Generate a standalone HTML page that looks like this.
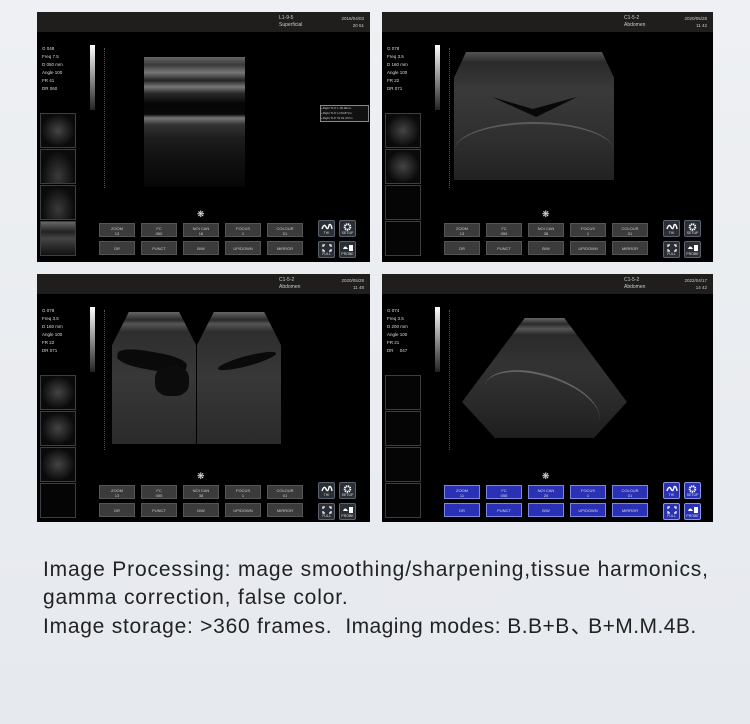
<!DOCTYPE html>
<html><head><meta charset="utf-8"><style>
*{margin:0;padding:0;box-sizing:border-box}
body{width:750px;height:724px;overflow:hidden;background:linear-gradient(180deg,#eef0f3 0%,#e9ecf0 60%,#e6e9ee 100%);font-family:"Liberation Sans",sans-serif;position:relative}
.p{position:absolute;width:331px;height:250px;background:#000;overflow:hidden}
.hd{position:absolute;left:0;top:0;width:100%;height:20px;background:#1f1e1d}
.hd .a{position:absolute;left:242px;top:3px;color:#ccc;font-size:5px;line-height:7px}
.hd .b{position:absolute;right:6px;top:3px;color:#ccc;font-size:4.5px;line-height:7px;text-align:right}
.info{position:absolute;left:5px;top:33px;color:#ddd;font-size:4.5px;line-height:8px}
.bar{position:absolute;left:53px;top:33px;width:5px;height:65px;background:linear-gradient(#fff,#222)}
.th{position:absolute;left:3px;width:36px;height:35px;border:1px solid #3a3f44;background:#050505}
.bt{position:absolute;width:36px;height:14px;background:#3b3b3b;border:1px solid #555;color:#ccc;font-size:4px;text-align:center;line-height:5px;padding-top:2px}
.blue .bt{background:#2b31b5;border:1px solid #7a86e6;color:#ddd}
.ic{position:absolute;width:17px;height:17px;background:#2a2f36;border:1px solid #5a6270;border-radius:2px;color:#ddd;font-size:3.5px;text-align:center}
.blue .ic{background:#2b31b5;border-color:#8a92e8}
.ic svg{display:block;margin:2px auto 0}
.snow{position:absolute;left:160px;top:197px;color:#eee;font-size:9px}
.img{position:absolute}
.dot{position:absolute;left:67px;top:36px;width:1px;height:140px;border-left:1px dotted #2a6a5a}
.txt{position:absolute;left:43px;color:#222;font-size:21px;letter-spacing:.85px;white-space:nowrap}
</style></head><body>

<!-- Panel A -->
<div class="p" style="left:37px;top:12px;width:333px">
<div class="hd"><div class="a">L1-9-5<br>Superficial</div><div class="b">2016/04/03<br>20 51</div></div>
<div class="info">G 048<br>Freq 7.5<br>D 050 mm<br>Angle 100<br>FR 41<br>DR 060</div>
<div class="bar"></div><div class="dot"></div>
<div class="img" style="left:107px;top:45px;width:101px;height:130px;background:linear-gradient(#666 0%,#3a3a3a 6%,#777 12%,#222 18%,#777 23%,#2a2a2a 28%,#050505 36%,#080808 44%,#777 47%,#333 52%,#1e1e1e 62%,#111 78%,#060606 100%)"></div>
<div style="position:absolute;left:283px;top:93px;width:49px;height:17px;border:1px solid #888;background:#111;color:#ccc;font-size:3px;line-height:5px">+Right THY L 00.90cm<br>+Right THY H 00.87cm<br>+Right THY W 01.37cm</div>
<div class="th" style="top:101px;background:radial-gradient(#444,#0a0a0a 70%)"></div>
<div class="th" style="top:137px;background:radial-gradient(ellipse at 50% 80%,#3a3a3a,#0a0a0a 70%)"></div>
<div class="th" style="top:173px;background:radial-gradient(ellipse at 50% 70%,#3a3a3a,#0a0a0a 70%)"></div>
<div class="th" style="top:209px;background:linear-gradient(#666,#222 30%,#444 50%,#111)"></div>
<div class="snow">❋</div>
<div class="bt" style="left:62px;top:211px">ZOOM<br>13</div><div class="bt" style="left:104px;top:211px">FC<br>060</div><div class="bt" style="left:146px;top:211px">NOI CAN<br>16</div><div class="bt" style="left:188px;top:211px">FOCUS<br>1</div><div class="bt" style="left:230px;top:211px">COLOUR<br>01</div>
<div class="bt" style="left:62px;top:229px;padding-top:4px">DR</div><div class="bt" style="left:104px;top:229px;padding-top:4px">PUNCT</div><div class="bt" style="left:146px;top:229px;padding-top:4px">B/W</div><div class="bt" style="left:188px;top:229px;padding-top:4px">UP/DOWN</div><div class="bt" style="left:230px;top:229px;padding-top:4px">MIRROR</div>
<div class="ic" style="left:281px;top:208px"><svg width="12" height="8"><path d="M1 6 Q3 0 5 4 Q7 8 8 2 Q10 0 11 6" stroke="#fff" stroke-width="1.4" fill="none"/></svg>THI</div>
<div class="ic" style="left:302px;top:208px"><svg width="9" height="8"><circle cx="4.5" cy="4" r="2.8" fill="none" stroke="#fff" stroke-width="2" stroke-dasharray="1.3 .6"/></svg>SETUP</div>
<div class="ic" style="left:281px;top:229px"><svg width="10" height="8"><path d="M1 3V1H3M7 1H9V3M9 5V7H7M3 7H1V5" stroke="#fff" stroke-width="1.2" fill="none"/></svg>FULL</div>
<div class="ic" style="left:302px;top:229px"><svg width="12" height="8"><path d="M1 5Q3 0 6 5ZM7 1H11V7H7Z" fill="#fff"/></svg>PROBE</div>
</div>

<!-- Panel B -->
<div class="p" style="left:382px;top:12px">
<div class="hd"><div class="a">C1-5-2<br>Abdomen</div><div class="b">2020/05/28<br>11 42</div></div>
<div class="info">G 078<br>Freq 3.5<br>D 160 mm<br>Angle 100<br>FR 22<br>DR 071</div>
<div class="bar"></div><div class="dot"></div>
<div class="img" style="left:72px;top:40px;width:80px;height:128px;background:linear-gradient(#555 0,#2a2a2a 8%,#3a3a3a 30%,#2e2e2e 70%,#222);clip-path:polygon(15% 0,100% 0,100% 100%,0 100%,0 20%)"></div>
<div class="img" style="left:152px;top:40px;width:80px;height:128px;background:linear-gradient(#555 0,#2a2a2a 8%,#3a3a3a 30%,#2e2e2e 70%,#222);clip-path:polygon(0 0,85% 0,100% 20%,100% 100%,0 100%)"></div>
<div class="img" style="left:110px;top:85px;width:85px;height:20px;background:#080808;clip-path:polygon(0 0,48% 60%,100% 0,52% 100%)"></div>
<div class="img" style="left:72px;top:110px;width:160px;height:58px;border-top:2px solid #777;border-radius:50% 50% 0 0;opacity:.6"></div>
<div class="th" style="top:101px;background:radial-gradient(#444,#0a0a0a 70%)"></div>
<div class="th" style="top:137px;background:radial-gradient(#444,#0a0a0a 70%)"></div>
<div class="th" style="top:173px"></div><div class="th" style="top:209px"></div>
<div class="snow">❋</div>
<div class="bt" style="left:62px;top:211px">ZOOM<br>13</div><div class="bt" style="left:104px;top:211px">FC<br>055</div><div class="bt" style="left:146px;top:211px">NOI CAN<br>38</div><div class="bt" style="left:188px;top:211px">FOCUS<br>1</div><div class="bt" style="left:230px;top:211px">COLOUR<br>01</div>
<div class="bt" style="left:62px;top:229px;padding-top:4px">DR</div><div class="bt" style="left:104px;top:229px;padding-top:4px">PUNCT</div><div class="bt" style="left:146px;top:229px;padding-top:4px">B/W</div><div class="bt" style="left:188px;top:229px;padding-top:4px">UP/DOWN</div><div class="bt" style="left:230px;top:229px;padding-top:4px">MIRROR</div>
<div class="ic" style="left:281px;top:208px"><svg width="12" height="8"><path d="M1 6 Q3 0 5 4 Q7 8 8 2 Q10 0 11 6" stroke="#fff" stroke-width="1.4" fill="none"/></svg>THI</div>
<div class="ic" style="left:302px;top:208px"><svg width="9" height="8"><circle cx="4.5" cy="4" r="2.8" fill="none" stroke="#fff" stroke-width="2" stroke-dasharray="1.3 .6"/></svg>SETUP</div>
<div class="ic" style="left:281px;top:229px"><svg width="10" height="8"><path d="M1 3V1H3M7 1H9V3M9 5V7H7M3 7H1V5" stroke="#fff" stroke-width="1.2" fill="none"/></svg>FULL</div>
<div class="ic" style="left:302px;top:229px"><svg width="12" height="8"><path d="M1 5Q3 0 6 5ZM7 1H11V7H7Z" fill="#fff"/></svg>PROBE</div>
</div>

<!-- Panel C -->
<div class="p" style="left:37px;top:274px;height:248px;width:333px">
<div class="hd"><div class="a">C1-5-2<br>Abdomen</div><div class="b">2020/05/28<br>11 48</div></div>
<div class="info">G 078<br>Freq 3.5<br>D 160 mm<br>Angle 100<br>FR 22<br>DR 071</div>
<div class="bar"></div><div class="dot"></div>
<div class="img" style="left:75px;top:38px;width:84px;height:132px;background:linear-gradient(#666 0,#2a2a2a 6%,#555 9%,#2e2e2e 15%,#383838 50%,#2a2a2a 100%);clip-path:polygon(20% 0,80% 0,100% 25%,100% 100%,0 100%,0 25%)"></div>
<div class="img" style="left:160px;top:38px;width:84px;height:132px;background:linear-gradient(#666 0,#2a2a2a 6%,#555 9%,#2e2e2e 15%,#383838 50%,#2a2a2a 100%);clip-path:polygon(20% 0,80% 0,100% 25%,100% 100%,0 100%,0 25%)"></div>
<div class="img" style="left:80px;top:78px;width:70px;height:18px;background:#0a0a0a;border-radius:40%;transform:rotate(10deg)"></div>
<div class="img" style="left:118px;top:92px;width:34px;height:30px;background:#0c0c0c;border-radius:40%"></div>
<div class="img" style="left:180px;top:82px;width:60px;height:10px;background:#0a0a0a;border-radius:50%;transform:rotate(-15deg)"></div>
<div class="th" style="top:101px;background:radial-gradient(#444,#0a0a0a 70%)"></div>
<div class="th" style="top:137px;background:radial-gradient(#444,#0a0a0a 70%)"></div>
<div class="th" style="top:173px;background:radial-gradient(#444,#0a0a0a 70%)"></div>
<div class="th" style="top:209px"></div>
<div class="snow">❋</div>
<div class="bt" style="left:62px;top:211px">ZOOM<br>13</div><div class="bt" style="left:104px;top:211px">FC<br>055</div><div class="bt" style="left:146px;top:211px">NOI CAN<br>38</div><div class="bt" style="left:188px;top:211px">FOCUS<br>1</div><div class="bt" style="left:230px;top:211px">COLOUR<br>01</div>
<div class="bt" style="left:62px;top:229px;padding-top:4px">DR</div><div class="bt" style="left:104px;top:229px;padding-top:4px">PUNCT</div><div class="bt" style="left:146px;top:229px;padding-top:4px">B/W</div><div class="bt" style="left:188px;top:229px;padding-top:4px">UP/DOWN</div><div class="bt" style="left:230px;top:229px;padding-top:4px">MIRROR</div>
<div class="ic" style="left:281px;top:208px"><svg width="12" height="8"><path d="M1 6 Q3 0 5 4 Q7 8 8 2 Q10 0 11 6" stroke="#fff" stroke-width="1.4" fill="none"/></svg>THI</div>
<div class="ic" style="left:302px;top:208px"><svg width="9" height="8"><circle cx="4.5" cy="4" r="2.8" fill="none" stroke="#fff" stroke-width="2" stroke-dasharray="1.3 .6"/></svg>SETUP</div>
<div class="ic" style="left:281px;top:229px"><svg width="10" height="8"><path d="M1 3V1H3M7 1H9V3M9 5V7H7M3 7H1V5" stroke="#fff" stroke-width="1.2" fill="none"/></svg>FULL</div>
<div class="ic" style="left:302px;top:229px"><svg width="12" height="8"><path d="M1 5Q3 0 6 5ZM7 1H11V7H7Z" fill="#fff"/></svg>PROBE</div>
</div>

<!-- Panel D -->
<div class="p blue" style="left:382px;top:274px;height:248px">
<div class="hd"><div class="a">C1-5-2<br>Abdomen</div><div class="b">2022/04/17<br>14 42</div></div>
<div class="info">G 074<br>Freq 3.5<br>D 200 mm<br>Angle 100<br>FR 21<br>DR &nbsp;&nbsp;&nbsp;&nbsp;047</div>
<div class="bar"></div><div class="dot"></div>
<div class="img" style="left:80px;top:44px;width:165px;height:120px;background:linear-gradient(#666 0,#2a2a2a 5%,#555 9%,#2a2a2a 14%,#333 40%,#2a2a2a 70%,#1e1e1e);clip-path:polygon(38% 0,62% 0,100% 70%,80% 100%,20% 100%,0 70%)"></div>
<div class="img" style="left:100px;top:100px;width:120px;height:60px;border-top:2px solid #888;border-radius:40% 60% 0 0;transform:rotate(12deg);opacity:.6"></div>
<div class="th" style="top:101px"></div><div class="th" style="top:137px"></div><div class="th" style="top:173px"></div><div class="th" style="top:209px"></div>
<div class="snow">❋</div>
<div class="bt" style="left:62px;top:211px">ZOOM<br>11</div><div class="bt" style="left:104px;top:211px">FC<br>055</div><div class="bt" style="left:146px;top:211px">NOI CAN<br>20</div><div class="bt" style="left:188px;top:211px">FOCUS<br>1</div><div class="bt" style="left:230px;top:211px">COLOUR<br>01</div>
<div class="bt" style="left:62px;top:229px;padding-top:4px">DR</div><div class="bt" style="left:104px;top:229px;padding-top:4px">PUNCT</div><div class="bt" style="left:146px;top:229px;padding-top:4px">B/W</div><div class="bt" style="left:188px;top:229px;padding-top:4px">UP/DOWN</div><div class="bt" style="left:230px;top:229px;padding-top:4px">MIRROR</div>
<div class="ic" style="left:281px;top:208px"><svg width="12" height="8"><path d="M1 6 Q3 0 5 4 Q7 8 8 2 Q10 0 11 6" stroke="#fff" stroke-width="1.4" fill="none"/></svg>THI</div>
<div class="ic" style="left:302px;top:208px"><svg width="9" height="8"><circle cx="4.5" cy="4" r="2.8" fill="none" stroke="#fff" stroke-width="2" stroke-dasharray="1.3 .6"/></svg>SETUP</div>
<div class="ic" style="left:281px;top:229px"><svg width="10" height="8"><path d="M1 3V1H3M7 1H9V3M9 5V7H7M3 7H1V5" stroke="#fff" stroke-width="1.2" fill="none"/></svg>FULL</div>
<div class="ic" style="left:302px;top:229px"><svg width="12" height="8"><path d="M1 5Q3 0 6 5ZM7 1H11V7H7Z" fill="#fff"/></svg>PROBE</div>
</div>

<div class="txt" style="top:558px">Image Processing: mage smoothing/sharpening,tissue harmonics,</div>
<div class="txt" style="top:586px">gamma correction, false color.</div>
<div class="txt" style="top:610px;letter-spacing:.75px">Image storage: &gt;360 frames.<span style="display:inline-block;width:13px"></span><span style="letter-spacing:.45px">Imaging modes: B.B+B<span style="margin-left:1px;margin-right:-4px">、</span>B+M.M.4B.</span></div>
</body></html>
